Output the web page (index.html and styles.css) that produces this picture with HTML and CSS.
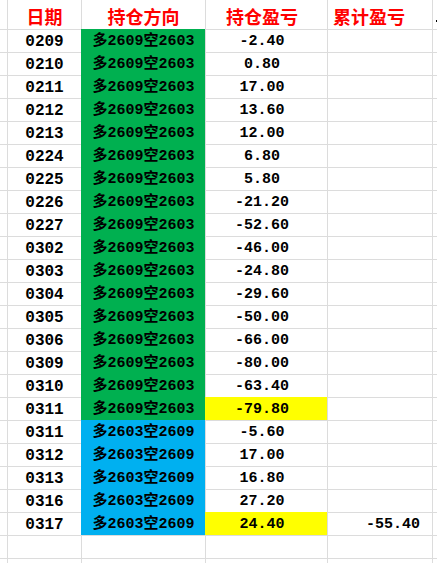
FILE: index.html
```html
<!DOCTYPE html>
<html lang="zh">
<head>
<meta charset="utf-8">
<title>持仓盈亏</title>
<link rel="stylesheet" href="styles.css">
</head>
<body>
<div class="sheet">
  <div class="row head">
    <div class="c c0"></div>
    <div class="c ca">日期</div>
    <div class="c cb">持仓方向</div>
    <div class="c cc">持仓盈亏</div>
    <div class="c cd">累计盈亏</div>
    <div class="c ce"><span class="mark"></span></div>
  </div>
  <div class="row"><div class="c c0"></div><div class="c ca">0209</div><div class="c cb green">多2609空2603</div><div class="c cc">-2.40</div><div class="c cd"></div><div class="c ce"></div></div>
  <div class="row"><div class="c c0"></div><div class="c ca">0210</div><div class="c cb green">多2609空2603</div><div class="c cc">0.80</div><div class="c cd"></div><div class="c ce"></div></div>
  <div class="row"><div class="c c0"></div><div class="c ca">0211</div><div class="c cb green">多2609空2603</div><div class="c cc">17.00</div><div class="c cd"></div><div class="c ce"></div></div>
  <div class="row"><div class="c c0"></div><div class="c ca">0212</div><div class="c cb green">多2609空2603</div><div class="c cc">13.60</div><div class="c cd"></div><div class="c ce"></div></div>
  <div class="row"><div class="c c0"></div><div class="c ca">0213</div><div class="c cb green">多2609空2603</div><div class="c cc">12.00</div><div class="c cd"></div><div class="c ce"></div></div>
  <div class="row"><div class="c c0"></div><div class="c ca">0224</div><div class="c cb green">多2609空2603</div><div class="c cc">6.80</div><div class="c cd"></div><div class="c ce"></div></div>
  <div class="row"><div class="c c0"></div><div class="c ca">0225</div><div class="c cb green">多2609空2603</div><div class="c cc">5.80</div><div class="c cd"></div><div class="c ce"></div></div>
  <div class="row"><div class="c c0"></div><div class="c ca">0226</div><div class="c cb green">多2609空2603</div><div class="c cc">-21.20</div><div class="c cd"></div><div class="c ce"></div></div>
  <div class="row"><div class="c c0"></div><div class="c ca">0227</div><div class="c cb green">多2609空2603</div><div class="c cc">-52.60</div><div class="c cd"></div><div class="c ce"></div></div>
  <div class="row"><div class="c c0"></div><div class="c ca">0302</div><div class="c cb green">多2609空2603</div><div class="c cc">-46.00</div><div class="c cd"></div><div class="c ce"></div></div>
  <div class="row"><div class="c c0"></div><div class="c ca">0303</div><div class="c cb green">多2609空2603</div><div class="c cc">-24.80</div><div class="c cd"></div><div class="c ce"></div></div>
  <div class="row"><div class="c c0"></div><div class="c ca">0304</div><div class="c cb green">多2609空2603</div><div class="c cc">-29.60</div><div class="c cd"></div><div class="c ce"></div></div>
  <div class="row"><div class="c c0"></div><div class="c ca">0305</div><div class="c cb green">多2609空2603</div><div class="c cc">-50.00</div><div class="c cd"></div><div class="c ce"></div></div>
  <div class="row"><div class="c c0"></div><div class="c ca">0306</div><div class="c cb green">多2609空2603</div><div class="c cc">-66.00</div><div class="c cd"></div><div class="c ce"></div></div>
  <div class="row"><div class="c c0"></div><div class="c ca">0309</div><div class="c cb green">多2609空2603</div><div class="c cc">-80.00</div><div class="c cd"></div><div class="c ce"></div></div>
  <div class="row"><div class="c c0"></div><div class="c ca">0310</div><div class="c cb green">多2609空2603</div><div class="c cc">-63.40</div><div class="c cd"></div><div class="c ce"></div></div>
  <div class="row"><div class="c c0"></div><div class="c ca">0311</div><div class="c cb green">多2609空2603</div><div class="c cc yellow">-79.80</div><div class="c cd"></div><div class="c ce"></div></div>
  <div class="row"><div class="c c0"></div><div class="c ca">0311</div><div class="c cb blue">多2603空2609</div><div class="c cc">-5.60</div><div class="c cd"></div><div class="c ce"></div></div>
  <div class="row"><div class="c c0"></div><div class="c ca">0312</div><div class="c cb blue">多2603空2609</div><div class="c cc">17.00</div><div class="c cd"></div><div class="c ce"></div></div>
  <div class="row"><div class="c c0"></div><div class="c ca">0313</div><div class="c cb blue">多2603空2609</div><div class="c cc">16.80</div><div class="c cd"></div><div class="c ce"></div></div>
  <div class="row"><div class="c c0"></div><div class="c ca">0316</div><div class="c cb blue">多2603空2609</div><div class="c cc">27.20</div><div class="c cd"></div><div class="c ce"></div></div>
  <div class="row"><div class="c c0"></div><div class="c ca">0317</div><div class="c cb blue">多2603空2609</div><div class="c cc yellow">24.40</div><div class="c cd total">-55.40</div><div class="c ce"></div></div>
  <div class="row"><div class="c c0"></div><div class="c ca"></div><div class="c cb"></div><div class="c cc"></div><div class="c cd"></div><div class="c ce"></div></div>
  <div class="row"><div class="c c0"></div><div class="c ca"></div><div class="c cb"></div><div class="c cc"></div><div class="c cd"></div><div class="c ce"></div></div>
</div>
</body>
</html>
```

FILE: styles.css
```css
html, body {
  margin: 0;
  padding: 0;
  background: #ffffff;
  overflow: hidden;
}

.sheet {
  display: flex;
  flex-direction: column;
  width: 437px;
  font-family: "Liberation Mono", "Noto Sans CJK SC", monospace;
  font-weight: bold;
  color: #000000;
}

.row {
  display: grid;
  grid-template-columns: 7px 74px 124px 122px 105px 5px;
  height: 23px;
}

.c {
  box-sizing: border-box;
  border-left: 1px solid #dcdcdc;
  border-top: 1px solid #dcdcdc;
  display: flex;
  align-items: center;
  justify-content: center;
  white-space: nowrap;
  overflow: hidden;
  font-size: 15px;
  line-height: 22px;
  padding-top: 2px;
}

.c0 {
  border-left: none;
}

.head {
  height: 29px;
}

.head .c {
  border-top: none;
  color: #ff0000;
  font-family: "Noto Sans CJK SC", sans-serif;
  font-size: 18px;
  align-items: flex-end;
  padding-top: 0;
  padding-bottom: 0;
  line-height: 25px;
  overflow: visible;
}

.head .cd {
  justify-content: flex-start;
  padding-left: 5px;
}

.head .ce {
  justify-content: flex-start;
  align-items: flex-start;
  padding-left: 3px;
  padding-top: 20px;
}

.mark {
  display: block;
  width: 2px;
  height: 2px;
  background: #000000;
}

.ca {
  font-size: 16px;
}

.cc {
  padding-right: 9px;
}

.total {
  justify-content: flex-end;
  padding-right: 12px;
}

.green {
  background: #00b050;
  border-color: transparent;
}

.blue {
  background: #00b0f0;
  border-color: transparent;
}

.yellow {
  background: #ffff00;
  border-color: transparent;
}
```
